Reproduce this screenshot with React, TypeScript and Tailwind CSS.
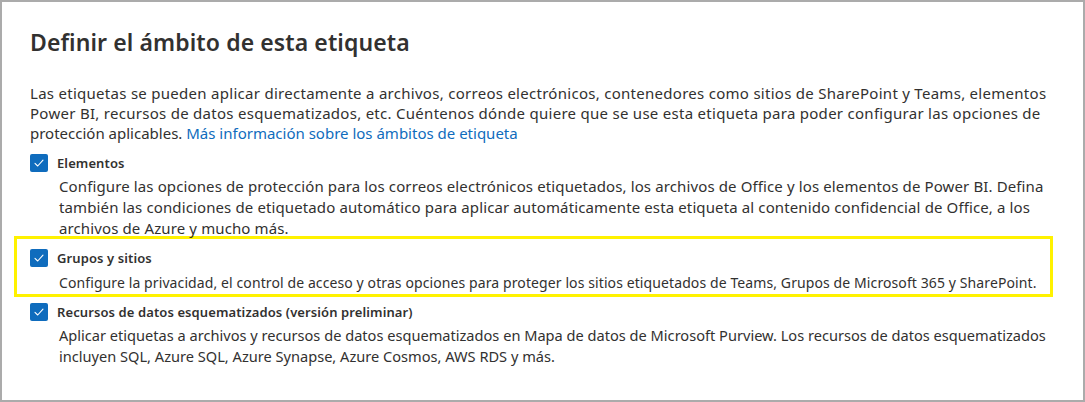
import { ReactNode } from "react";

function Check() {
  return (
    <div className="w-[18px] h-[18px] shrink-0 rounded-[2px] bg-[#0f6cbd] flex items-center justify-center">
      <svg width="12" height="12" viewBox="0 0 12 12" fill="none">
        <path d="M2 6.4 L4.7 9 L10 3.2" stroke="white" strokeWidth="1.1" strokeLinecap="round" strokeLinejoin="round" />
      </svg>
    </div>
  );
}

function Item({ label, children, descClass }: { label: string; children: ReactNode; descClass: string }) {
  return (
    <div>
      <div className="flex items-center gap-[9px] h-[18px]">
        <Check />
        <span className="text-[13px] font-semibold leading-[18px] tracking-[0.1px]">{label}</span>
      </div>
      <p className={`${descClass} pl-[29px] leading-[21px] whitespace-nowrap`}>{children}</p>
    </div>
  );
}

export default function App() {
  return (
    <div
      className="w-[1085px] h-[402px] bg-white border-2 border-[#ababab] pl-[28px] pt-[26px] text-[#323130] overflow-hidden"
      style={{ fontFamily: '"Noto Sans", "Open Sans", sans-serif' }}
    >
      <h1 className="text-[23px] font-semibold leading-[28px] tracking-[0.1px]">Definir el ámbito de esta etiqueta</h1>

      <p className="mt-[27px] text-[15px] tracking-[0.28px] leading-[20px] whitespace-nowrap">
        Las etiquetas se pueden aplicar directamente a archivos, correos electrónicos, contenedores como sitios de SharePoint y Teams, elementos
        <br />
        Power BI, recursos de datos esquematizados, etc. Cuéntenos dónde quiere que se use esta etiqueta para poder configurar las opciones de
        <br />
        <span className="tracking-normal">
          protección aplicables. <span className="text-[#0f6cbd]">Más información sobre los ámbitos de etiqueta</span>
        </span>
      </p>

      <div className="mt-[11px]">
        <Item label="Elementos" descClass="mt-[4px] text-[15px] tracking-[0.12px]">
          Configure las opciones de protección para los correos electrónicos etiquetados, los archivos de Office y los elementos de Power BI. Defina
          <br />
          también las condiciones de etiquetado automático para aplicar automáticamente esta etiqueta al contenido confidencial de Office, a los
          <br />
          archivos de Azure y mucho más.
        </Item>
      </div>

      <div className="mt-[-3px] ml-[-16px] w-[1039px] border-[3px] border-[#fff200] pl-[13px] pt-[10px] pb-[1px]">
        <Item label="Grupos y sitios" descClass="mt-[5px] text-[14px] tracking-[0.1px]">
          Configure la privacidad, el control de acceso y otras opciones para proteger los sitios etiquetados de Teams, Grupos de Microsoft 365 y SharePoint.
        </Item>
      </div>

      <div className="mt-[6px]">
        <Item label="Recursos de datos esquematizados (versión preliminar)" descClass="mt-[4px] text-[14.6px]">
          Aplicar etiquetas a archivos y recursos de datos esquematizados en Mapa de datos de Microsoft Purview. Los recursos de datos esquematizados
          <br />
          incluyen SQL, Azure SQL, Azure Synapse, Azure Cosmos, AWS RDS y más.
        </Item>
      </div>
    </div>
  );
}
